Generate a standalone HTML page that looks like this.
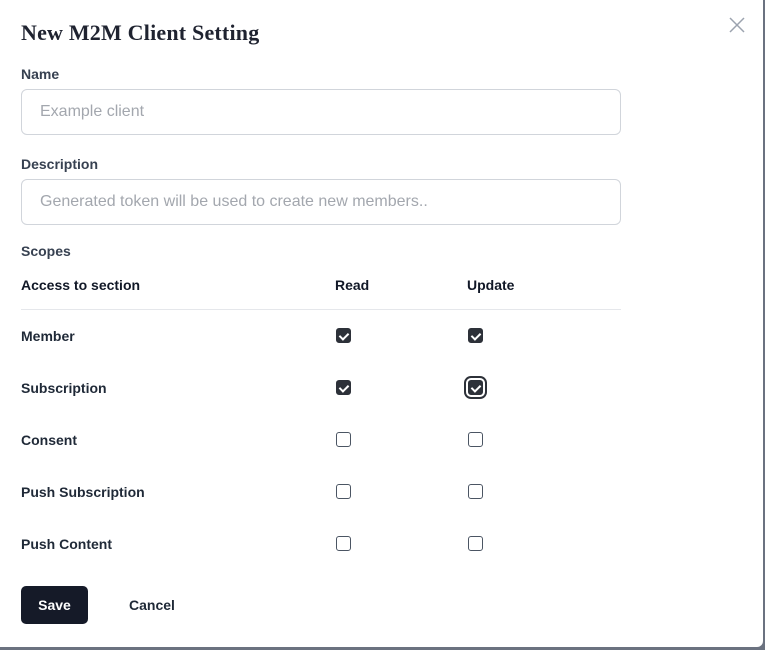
<!DOCTYPE html>
<html><head><style>
*{box-sizing:border-box;margin:0;padding:0}
body{width:765px;height:650px;background:#6b7280;font-family:"Liberation Sans",sans-serif;overflow:hidden;position:relative}
.m{position:absolute;left:0;top:0;width:763px;height:647px;background:#fff;border-radius:0 0 6px 0}
.a{position:absolute;white-space:nowrap}
.t{left:21px;top:20px;font-family:"Liberation Serif",serif;font-weight:bold;font-size:22px;color:#1f2330;letter-spacing:0.2px}
.l{left:21px;font-size:14px;color:#374151;font-weight:bold;font-size:14px}
.in{position:absolute;left:21px;width:600px;height:46px;border:1px solid #d1d5db;border-radius:6px;font-size:16px;color:#a3a7ae;padding:13px 18px}
.h{font-size:14px;font-weight:bold;color:#111827}
.r{font-size:14px;font-weight:bold;color:#1f2937}
.cb{position:absolute;width:15px;height:15px;border-radius:3px;border:1px solid #4b5563;background:#fff}
.cb.on{background:#2d3139;border-color:#2d3139}
.cb.on::after{content:"";position:absolute;left:4px;top:1.5px;width:4px;height:7px;border:solid #fff;border-width:0 2px 2px 0;transform:rotate(45deg)}
.f{outline:2px solid #2d3139;outline-offset:2px}
</style></head><body>
<div class="m">
<div class="a t">New M2M Client Setting</div>
<svg class="a" style="left:729px;top:17px" width="16" height="16"><path d="M1 1L15 15M15 1L1 15" stroke="#9ca3af" stroke-width="1.5"/></svg>
<div class="a l" style="top:66px">Name</div>
<div class="in" style="top:89px">Example client</div>
<div class="a l" style="top:156px">Description</div>
<div class="in" style="top:179px">Generated token will be used to create new members..</div>
<div class="a l" style="top:243px">Scopes</div>
<div class="a h" style="left:21px;top:277px">Access to section</div>
<div class="a h" style="left:335px;top:277px">Read</div>
<div class="a h" style="left:467px;top:277px">Update</div>
<div class="a" style="left:21px;top:309px;width:600px;height:1px;background:#e5e7eb"></div>
<div class="a r" style="left:21px;top:328px">Member</div>
<div class="a r" style="left:21px;top:380px">Subscription</div>
<div class="a r" style="left:21px;top:432px">Consent</div>
<div class="a r" style="left:21px;top:484px">Push Subscription</div>
<div class="a r" style="left:21px;top:536px">Push Content</div>
<div class="cb on" style="left:336px;top:328px"></div><div class="cb on" style="left:468px;top:328px"></div>
<div class="cb on" style="left:336px;top:380px"></div><div class="cb on f" style="left:468px;top:380px"></div>
<div class="cb" style="left:336px;top:432px"></div><div class="cb" style="left:468px;top:432px"></div>
<div class="cb" style="left:336px;top:484px"></div><div class="cb" style="left:468px;top:484px"></div>
<div class="cb" style="left:336px;top:536px"></div><div class="cb" style="left:468px;top:536px"></div>
<div class="a" style="left:21px;top:586px;width:67px;height:38px;background:#151a28;border-radius:5px;color:#fff;font-size:14px;font-weight:bold;text-align:center;line-height:38px">Save</div>
<div class="a" style="left:129px;top:597px;font-size:14px;font-weight:bold;color:#1f2937">Cancel</div>
</div>
</body></html>
